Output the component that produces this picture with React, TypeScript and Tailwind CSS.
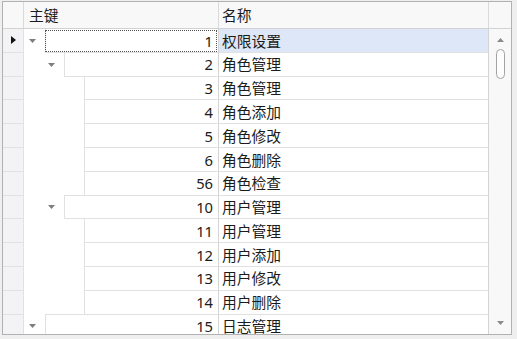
import React from "react";

type Row = { id: number; name: string; level: 0 | 1 | 2; expandable?: boolean };

const rows: Row[] = [
  { id: 1, name: "权限设置", level: 0, expandable: true },
  { id: 2, name: "角色管理", level: 1, expandable: true },
  { id: 3, name: "角色管理", level: 2 },
  { id: 4, name: "角色添加", level: 2 },
  { id: 5, name: "角色修改", level: 2 },
  { id: 6, name: "角色删除", level: 2 },
  { id: 56, name: "角色检查", level: 2 },
  { id: 10, name: "用户管理", level: 1, expandable: true },
  { id: 11, name: "用户管理", level: 2 },
  { id: 12, name: "用户添加", level: 2 },
  { id: 13, name: "用户修改", level: 2 },
  { id: 14, name: "用户删除", level: 2 },
  { id: 15, name: "日志管理", level: 0, expandable: true },
];

const indentClass: Record<number, string> = {
  0: "w-[21px]",
  1: "w-[40px]",
  2: "w-[60px]",
};

const font = {
  fontFamily: '"Noto Sans", "Noto Sans CJK SC", sans-serif',
};

function ExpandArrow() {
  return (
    <svg width="7" height="4" viewBox="0 0 7 4" className="block">
      <polygon points="0,0 7,0 3.5,4" fill="#7d7d7d" />
    </svg>
  );
}

export default function App() {
  return (
    <div className="w-[517px] h-[339px] bg-[#efefef] pt-px pl-[2px] overflow-hidden" style={font}>
      <div className="w-[510px] h-[334px] border border-[#b1b1b1] bg-white flex flex-col overflow-hidden text-[14.75px] text-[#1b1b1b]">
        {/* Header */}
        <div className="flex h-[27px] shrink-0 border-b border-[#d2d2d2] bg-[#f8f8f8]">
          <div className="w-[21px] shrink-0 border-r border-[#dadada]" />
          <div className="w-[195px] shrink-0 border-r border-[#dadada] flex items-center pl-[5px] leading-none">
            主键
          </div>
          <div className="w-[270px] shrink-0 border-r border-[#dadada] flex items-center pl-[3px] leading-none">
            名称
          </div>
          <div className="flex-1" />
        </div>

        {/* Body */}
        <div className="flex flex-1 min-h-0">
          <div className="w-[486px] shrink-0 flex flex-col overflow-hidden">
            {rows.map((r, i) => (
              <div key={r.id} className="flex h-[24.8px] shrink-0 -mt-px">
                <div className="w-[21px] shrink-0 border-y border-r border-[#e1e1e1] bg-[#f3f3f6] flex items-center pl-[8px]">
                  {i === 0 && (
                    <svg width="5" height="8" viewBox="0 0 5 8" className="block">
                      <polygon points="0,0 5,4 0,8" fill="#111" />
                    </svg>
                  )}
                </div>
                <div className={`${indentClass[r.level]} shrink-0 relative`}>
                  {r.expandable && (
                    <div className="absolute right-[9px] top-0 bottom-0 flex items-center pt-px">
                      <ExpandArrow />
                    </div>
                  )}
                </div>
                <div className="flex-1 relative border-y border-l border-r border-[#e1e1e1] border-r-[#d4d4d4] flex items-center justify-end pr-[5px] leading-none pt-px">
                  {i === 0 && (
                    <div className="absolute left-[-1px] top-[1px] right-[1px] bottom-0 border border-dotted border-[#555]" />
                  )}
                  {r.id}
                </div>
                <div
                  className={`w-[270px] shrink-0 border-y border-r border-[#e1e1e1] border-r-[#d4d4d4] flex items-center pl-[3px] leading-none pt-px ${
                    i === 0 ? "bg-[#dee7f8]" : "bg-white"
                  }`}
                >
                  {r.name}
                </div>
              </div>
            ))}
          </div>

          {/* Scrollbar */}
          <div className="flex-1 bg-[#f8f8f8] flex flex-col items-center pt-[9px] pb-[9px] pl-px">
            <svg width="7" height="4" viewBox="0 0 7 4" className="block">
              <polygon points="0,4 7,4 3.5,0" fill="#8a8a8a" />
            </svg>
            <div className="mt-[7px] w-[9px] h-[30px] rounded-full border border-[#a3a3a3] bg-[#fdfdfd]" />
            <div className="flex-1" />
            <svg width="7" height="4" viewBox="0 0 7 4" className="block">
              <polygon points="0,0 7,0 3.5,4" fill="#8a8a8a" />
            </svg>
          </div>
        </div>
      </div>
    </div>
  );
}
